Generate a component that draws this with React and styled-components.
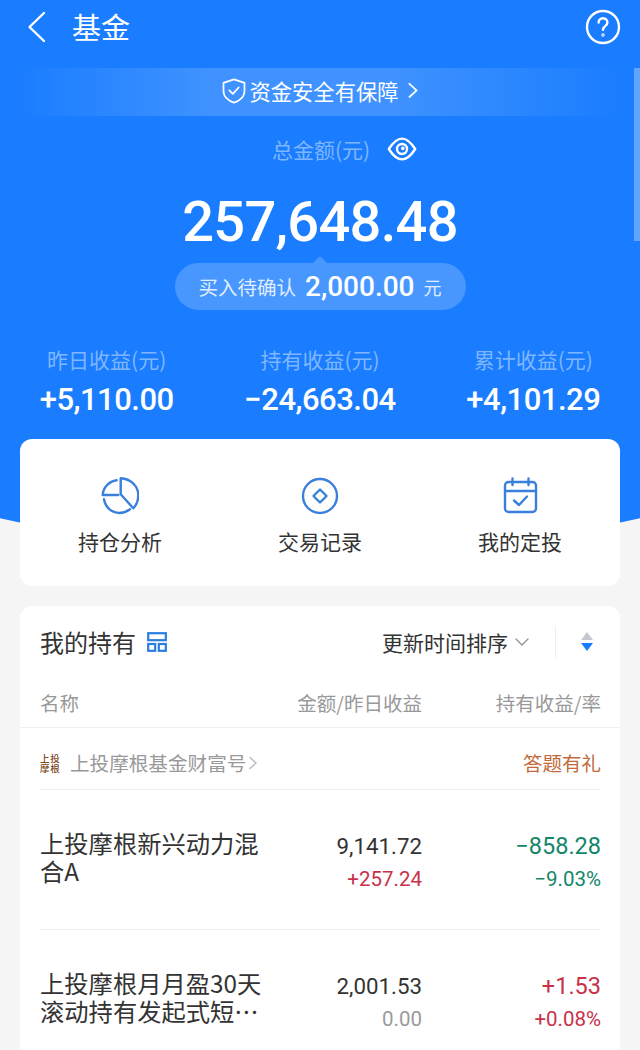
import styled, { createGlobalStyle } from "styled-components";

const funds = [
    {
        name: "上投摩根新兴动力混合A",
        amount: "9,141.72",
        daily: "+257.24",
        dailyTone: "up",
        hold: "−858.28",
        rate: "−9.03%",
        tone: "down",
    },
    {
        name: "上投摩根月月盈30天滚动持有发起式短…",
        amount: "2,001.53",
        daily: "0.00",
        dailyTone: "flat",
        hold: "+1.53",
        rate: "+0.08%",
        tone: "up",
    },
];

const GlobalStyle = createGlobalStyle`
    html, body {
        margin: 0;
        padding: 0;
        background: #f5f5f5;
    }
    * {
        box-sizing: border-box;
    }
`;

const BackIcon = () => (
    <svg width="22" height="32" viewBox="0 0 22 32" fill="none" stroke="#fff" strokeWidth="2.4" strokeLinecap="round" strokeLinejoin="round">
        <path d="M18 2 L3.5 16 L18 30" />
    </svg>
);

const HelpIcon = () => (
    <svg width="36" height="36" viewBox="0 0 36 36" fill="none" stroke="#fff" strokeWidth="2.4" strokeLinecap="round" strokeLinejoin="round">
        <circle cx="18" cy="18" r="16" />
        <path d="M13.6 13.6c0-2.6 2-4.4 4.4-4.4s4.4 1.8 4.4 4.2c0 3.6-4.4 3.8-4.4 7.4" />
        <circle cx="18" cy="26" r="0.5" fill="#fff" />
    </svg>
);

const ShieldIcon = () => (
    <svg width="26" height="28" viewBox="0 0 22 24" fill="none" stroke="#fff" strokeWidth="1.5" strokeLinecap="round" strokeLinejoin="round">
        <path d="M11 2 L20 5 V12 C20 17 15.5 20.5 11 22 C6.5 20.5 2 17 2 12 V5 Z" />
        <path d="M7 11.5 L10 14.5 L15 9" />
    </svg>
);

const SmallChevron = ({ color = "#fff", size = 12 }) => (
    <svg width={size} height={size * 1.4} viewBox="0 0 10 14" fill="none" stroke={color} strokeWidth="1.5" strokeLinecap="round" strokeLinejoin="round">
        <path d="M2 1.5 L8 7 L2 12.5" />
    </svg>
);

const EyeIcon = () => (
    <svg width="30" height="26" viewBox="0 0 30 26" fill="none" stroke="#fff" strokeWidth="2.4" strokeLinejoin="round">
        <path d="M1.8 13 C6 6.5 10 2.6 15 2.6 C20 2.6 24 6.5 28.2 13 C24 19.5 20 23.4 15 23.4 C10 23.4 6 19.5 1.8 13 Z" />
        <circle cx="15" cy="13" r="5" />
        <circle cx="15.8" cy="12.4" r="1.8" fill="#fff" stroke="none" />
    </svg>
);

const PieIcon = () => (
    <svg width="38" height="38" viewBox="0 0 38 38" fill="none" stroke="#3a7fdc" strokeWidth="2.4" strokeLinecap="round" strokeLinejoin="round">
        <path d="M15.7 3.3 C8 4.5 2 10.5 1.7 18 H17.3" />
        <path d="M19.7 1.3 V17.3 L32.3 31.3 C35.5 28 37.3 23 37.3 18 C37.3 9 29.5 1.8 19.7 1.3 Z" />
        <path d="M3 22.3 C4.5 30.5 10.5 36 18.5 36 C22 36 26 34.5 29 32.3" />
    </svg>
);

const CoinIcon = () => (
    <svg width="38" height="38" viewBox="0 0 38 38" fill="none" stroke="#3a7fdc" strokeWidth="2.4" strokeLinejoin="round">
        <circle cx="19" cy="19" r="17" />
        <path d="M19 12.5 L25.5 19 L19 25.5 L12.5 19 Z" />
    </svg>
);

const CalendarIcon = () => (
    <svg width="38" height="38" viewBox="0 0 38 38" fill="none" stroke="#3a7fdc" strokeWidth="2.4" strokeLinecap="round" strokeLinejoin="round">
        <rect x="4" y="5" width="31" height="30" rx="3.5" />
        <path d="M4 14 H35" />
        <path d="M11.5 1.5 V8 M27.5 1.5 V8" />
        <path d="M13 23.5 L18 28 L26 19.5" />
    </svg>
);

const GridIcon = () => (
    <svg width="20" height="20" viewBox="0 0 20 20" fill="none" stroke="#2a7de1" strokeWidth="2.2">
        <rect x="1.2" y="1.2" width="17.6" height="7" />
        <rect x="1.2" y="12" width="7" height="6.8" />
        <rect x="11.8" y="12" width="7" height="6.8" />
    </svg>
);

const SortIcon = () => (
    <svg width="14" height="22" viewBox="0 0 14 22">
        <path d="M7 1 L13 9 H1 Z" fill="#c4c8cf" />
        <path d="M7 20 L13 12 H1 Z" fill="#1a7dff" />
    </svg>
);

const App = () => {
    return (
        <Page>
            <GlobalStyle />
            <Scrollbar />
            <Hero>
                <TopBar>
                    <TitleGroup>
                        <BackIcon />
                        <Title>基金</Title>
                    </TitleGroup>
                    <HelpIcon />
                </TopBar>

                <SafeBanner>
                    <ShieldIcon />
                    <BannerText>资金安全有保障</BannerText>
                    <SmallChevron />
                </SafeBanner>

                <TotalLabel>
                    <span>总金额(元)</span>
                    <EyeIcon />
                </TotalLabel>
                <TotalValue>257,648.48</TotalValue>
                <PendingPill>
                    买入待确认
                    <PendingValue>2,000.00</PendingValue>
                    <PendingUnit>元</PendingUnit>
                </PendingPill>

                <Stats>
                    <Stat>
                        <StatLabel>昨日收益(元)</StatLabel>
                        <StatValue>+5,110.00</StatValue>
                    </Stat>
                    <Stat>
                        <StatLabel>持有收益(元)</StatLabel>
                        <StatValue>−24,663.04</StatValue>
                    </Stat>
                    <Stat>
                        <StatLabel>累计收益(元)</StatLabel>
                        <StatValue>+4,101.29</StatValue>
                    </Stat>
                </Stats>
            </Hero>

            <Content>
                <ActionCard>
                    <Action>
                        <PieIcon />
                        <ActionLabel>持仓分析</ActionLabel>
                    </Action>
                    <Action>
                        <CoinIcon />
                        <ActionLabel>交易记录</ActionLabel>
                    </Action>
                    <Action>
                        <CalendarIcon />
                        <ActionLabel>我的定投</ActionLabel>
                    </Action>
                </ActionCard>

                <HoldingCard>
                    <HoldingHead>
                        <HeadTitle>
                            我的持有
                            <GridIcon />
                        </HeadTitle>
                        <SortGroup>
                            <SortText>更新时间排序</SortText>
                            <svg width="16" height="10" viewBox="0 0 16 10" fill="none" stroke="#8d9096" strokeWidth="1.3" strokeLinecap="round" strokeLinejoin="round">
                                <path d="M2 2 L8 8 L14 2" />
                            </svg>
                            <SortDivider />
                            <SortIcon />
                        </SortGroup>
                    </HoldingHead>

                    <ColumnRow>
                        <NameHeader>名称</NameHeader>
                        <AmountHeader>金额/昨日收益</AmountHeader>
                        <HoldHeader>持有收益/率</HoldHeader>
                    </ColumnRow>

                    <BrandRow>
                        <BrandName>
                            <BrandLogo>上投摩根</BrandLogo>
                            上投摩根基金财富号
                            <SmallChevron color="#b9bbc0" size={10} />
                        </BrandName>
                        <BrandPromo>答题有礼</BrandPromo>
                    </BrandRow>

                    {funds.map((fund) => (
                        <FundRow key={fund.name}>
                            <FundName>{fund.name}</FundName>
                            <FundAmount>
                                <Amount>{fund.amount}</Amount>
                                <Daily tone={fund.dailyTone}>{fund.daily}</Daily>
                            </FundAmount>
                            <FundHold>
                                <HoldValue tone={fund.tone}>{fund.hold}</HoldValue>
                                <HoldRate tone={fund.tone}>{fund.rate}</HoldRate>
                            </FundHold>
                        </FundRow>
                    ))}
                </HoldingCard>
            </Content>
        </Page>
    );
}


export default App;


const cjk = `"Noto Sans CJK SC", "Noto Sans", sans-serif`;
const digits = `Roboto, "Noto Sans CJK SC", sans-serif`;

const toneColor = {
    up: "#c8314a",
    down: "#14866a",
    flat: "#9a9a9a",
};

const Page = styled.div`
    position: relative;
    width: 640px;
    height: 1050px;
    overflow: hidden;
    background: #f5f5f5;
    font-family: ${cjk};
`;

const Scrollbar = styled.div`
    position: absolute;
    top: 68px;
    right: 0;
    width: 6px;
    height: 173px;
    background: rgba(255, 255, 255, .3);
    z-index: 5;
`;

const Hero = styled.div`
    position: relative;
    height: 439px;
    background: #1a7dff;
    color: #fff;

    &::after {
        content: "";
        position: absolute;
        left: -200px;
        right: -200px;
        top: 250px;
        height: 300px;
        background: #1a7dff;
        border-radius: 50%;
        z-index: 0;
    }

    & > * {
        position: relative;
        z-index: 1;
    }
`;

const TopBar = styled.div`
    height: 68px;
    padding: 0 19px 15px 26px;
    display: flex;
    align-items: center;
    justify-content: space-between;
`;

const TitleGroup = styled.div`
    display: flex;
    align-items: center;
    gap: 24px;
`;

const Title = styled.div`
    margin-bottom: 2px;
    font-size: 29px;
    line-height: 40px;
`;

const SafeBanner = styled.div`
    height: 48px;
    padding-bottom: 3px;
    display: flex;
    align-items: center;
    justify-content: center;
    font-size: 21.3px;
    background: linear-gradient(90deg, rgba(255,255,255,0) 3%, rgba(255,255,255,.16) 32%, rgba(255,255,255,.16) 62%, rgba(255,255,255,0) 97%);
`;

const BannerText = styled.span`
    margin: 0 8px 0 2px;
`;

const TotalLabel = styled.div`
    height: 70px;
    padding: 0 0 4px 49px;
    display: flex;
    align-items: center;
    justify-content: center;
    gap: 17px;
    font-size: 21px;
    color: #7fb6ff;
`;

const TotalValue = styled.div`
    margin-top: 4px;
    text-align: center;
    font-family: ${digits};
    font-size: 56px;
    font-weight: 500;
    line-height: 64px;
    letter-spacing: -.7px;
`;

const PendingPill = styled.div`
    position: relative;
    width: 291px;
    height: 47px;
    margin: 9px auto 0;
    display: flex;
    align-items: center;
    justify-content: center;
    font-size: 19.5px;
    color: #e0edff;
    border-radius: 24px;
    background: rgba(255, 255, 255, .2);

    &::before {
        content: "";
        position: absolute;
        top: -7px;
        left: 138px;
        border-left: 7px solid transparent;
        border-right: 7px solid transparent;
        border-bottom: 7px solid rgba(255, 255, 255, .2);
    }
`;

const PendingValue = styled.span`
    margin: 0 9px;
    font-family: ${digits};
    font-size: 28px;
    font-weight: 500;
    color: #fff;
`;

const PendingUnit = styled.span`
    font-size: 18px;
`;

const Stats = styled.div`
    margin-top: 34px;
    display: grid;
    grid-template-columns: repeat(3, 1fr);
`;

const Stat = styled.div`
    display: flex;
    flex-direction: column;
    align-items: center;
    gap: 6px;
`;

const StatLabel = styled.div`
    font-size: 21px;
    line-height: 30px;
    color: #7fb6ff;
`;

const StatValue = styled.div`
    font-family: ${digits};
    font-size: 31px;
    font-weight: 500;
    line-height: 40px;
    letter-spacing: -.5px;
`;

const Content = styled.div`
    position: relative;
    z-index: 2;
    padding: 0 20px;
    display: flex;
    flex-direction: column;
    gap: 20px;
`;

const ActionCard = styled.div`
    height: 147px;
    padding-top: 38px;
    display: grid;
    grid-template-columns: repeat(3, 1fr);
    background: #fff;
    border-radius: 12px;
`;

const Action = styled.div`
    display: flex;
    flex-direction: column;
    align-items: center;
    gap: 11px;
`;

const ActionLabel = styled.div`
    font-size: 21px;
    line-height: 30px;
    color: #333;
`;

const HoldingCard = styled.div`
    padding-bottom: 40px;
    background: #fff;
    border-radius: 12px;
`;

const HoldingHead = styled.div`
    height: 74px;
    padding: 0 20px 3px;
    display: flex;
    align-items: center;
    justify-content: space-between;
`;

const HeadTitle = styled.div`
    display: flex;
    align-items: center;
    gap: 11px;
    font-size: 24px;
    color: #333;
`;

const SortGroup = styled.div`
    display: flex;
    align-items: center;
    padding-right: 6px;
`;

const SortText = styled.div`
    margin-right: 6px;
    font-size: 21px;
    color: #333;
`;

const SortDivider = styled.div`
    width: 1px;
    height: 32px;
    margin: 0 24px 0 25px;
    background: #eeeeee;
`;

const ColumnRow = styled.div`
    height: 48px;
    padding: 0 19px 2px 20px;
    display: grid;
    grid-template-columns: 1fr 162px 179px;
    align-items: center;
    font-size: 19.5px;
    color: #999;
    border-bottom: 1px solid #eeeeee;
`;

const NameHeader = styled.div``;

const AmountHeader = styled.div`
    text-align: right;
`;

const HoldHeader = styled.div`
    text-align: right;
`;

const BrandRow = styled.div`
    height: 62px;
    margin: 0 19px 0 20px;
    padding-top: 8px;
    display: flex;
    align-items: center;
    justify-content: space-between;
    border-bottom: 1px solid #eeeeee;
`;

const BrandName = styled.div`
    display: flex;
    align-items: center;
    font-size: 19.6px;
    color: #999;

    svg {
        margin-left: 2px;
    }
`;

const BrandLogo = styled.span`
    width: 22px;
    margin-right: 8px;
    font-size: 9.5px;
    font-weight: 500;
    line-height: 10px;
    letter-spacing: .8px;
    color: #7c4a24;
    word-break: break-all;
`;

const BrandPromo = styled.div`
    font-size: 19.5px;
    color: #c26a3a;
`;

const FundRow = styled.div`
    height: 140px;
    margin: 0 19px 0 20px;
    padding-top: 39px;
    display: grid;
    grid-template-columns: 220px 162px 179px;
    border-bottom: 1px solid #eeeeee;
`;

const FundName = styled.div`
    margin-right: -8px;
    font-size: 24.3px;
    line-height: 28px;
    color: #333;
`;

const FundAmount = styled.div`
    margin-top: 1px;
    text-align: right;
`;

const Amount = styled.div`
    font-family: ${digits};
    font-size: 22.3px;
    line-height: 32px;
    color: #333;
`;

const Daily = styled.div`
    margin-top: 1px;
    font-family: ${digits};
    font-size: 20.5px;
    line-height: 32px;
    color: ${props => toneColor[props.tone]};
`;

const FundHold = styled.div`
    margin-top: 1px;
    text-align: right;
`;

const HoldValue = styled.div`
    font-family: ${digits};
    font-size: 23.5px;
    line-height: 32px;
    color: ${props => toneColor[props.tone]};
`;

const HoldRate = styled.div`
    margin-top: 1px;
    font-family: ${digits};
    font-size: 20.5px;
    line-height: 32px;
    color: ${props => toneColor[props.tone]};
`;
